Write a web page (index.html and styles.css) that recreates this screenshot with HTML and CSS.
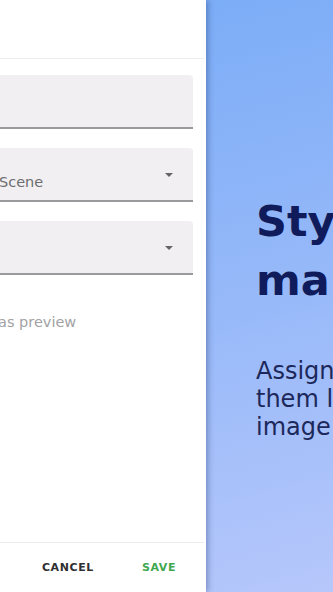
FILE: index.html
```html
<!DOCTYPE html>
<html lang="en">
  <head>
    <meta charset="UTF-8">
    <meta name="viewport" content="width=device-width, initial-scale=1.0">
    <title>Style editor</title>
    <link rel="stylesheet" href="styles.css">
  </head>
  <body>
    <div class="screen">
        <div class="dialog">
            <div class="dialog-header"></div>

            <div class="fields">
                <div class="field"></div>

                <div class="field select">
                    <span class="field-value">Scene</span>
                    <span class="caret"></span>
                </div>

                <div class="field select">
                    <span class="caret"></span>
                </div>

                <div class="hint">as preview</div>
            </div>

            <div class="dialog-actions">
                <button class="text-button">CANCEL</button>
                <button class="text-button primary">SAVE</button>
            </div>
        </div>

        <div class="hero">
            <h1 class="hero-title">Style<br>ma ke</h1>
            <p class="hero-text">Assign styles<br>them like<br>image style</p>
        </div>
    </div>
  </body>
</html>
```

FILE: styles.css
```css
body {
    margin: 0;
    padding: 0;
    width: 333px;
    height: 592px;
    overflow: hidden;
    font-family: 'DejaVu Sans', 'Noto Sans', sans-serif;
    background: #ffffff;
}

.screen {
    display: flex;
    height: 100%;
}

/* left: the dialog, cut off by the screen edge */

.dialog {
    width: 206px;
    flex-shrink: 0;
    display: flex;
    flex-direction: column;
    background: #ffffff;
    position: relative;
    z-index: 1;
    box-shadow: 2px 0 6px rgba(20, 40, 90, 0.35);
}

.dialog-header {
    height: 58px;
    margin-right: 2px;
    border-bottom: 1px solid #ededf0;
}

.fields {
    flex: 1;
    display: flex;
    flex-direction: column;
    gap: 19px;
    padding-top: 16px;
}

.field {
    width: 193px;
    height: 52px;
    background: #f1eff2;
    border-bottom: 2px solid #9a9a9c;
    border-top-right-radius: 4px;
    position: relative;
}

.field-value {
    position: absolute;
    left: 0;
    top: 26px;
    font-size: 14.5px;
    color: #6d6d70;
    text-indent: -1px;
}

.caret {
    position: absolute;
    right: 20px;
    top: 25px;
    width: 0;
    height: 0;
    border-left: 4px solid transparent;
    border-right: 4px solid transparent;
    border-top: 4px solid #656567;
}

.hint {
    margin-top: 20px;
    font-size: 14.5px;
    color: #a2a2a5;
    text-indent: -2px;
}

.dialog-actions {
    height: 49px;
    margin-right: 2px;
    border-top: 1px solid #ededf0;
    display: flex;
    align-items: center;
    justify-content: flex-end;
    gap: 48px;
    padding-right: 28px;
}

.text-button {
    background: none;
    border: none;
    padding: 0;
    font-family: 'DejaVu Sans', sans-serif;
    font-size: 11px;
    font-weight: 700;
    letter-spacing: 0.6px;
    color: #2f2f31;
    cursor: pointer;
}

.text-button.primary {
    color: #3fa84f;
}

/* right: onboarding panel */

.hero {
    flex: 1;
    overflow: hidden;
    padding-left: 50px;
    padding-top: 192px;
    background: linear-gradient(165deg, #7cadf7 0%, #97b9f9 50%, #b6c7fb 100%);
    white-space: nowrap;
}

.hero-title {
    margin: 0;
    font-size: 43px;
    font-weight: 700;
    line-height: 59px;
    color: #101b5c;
}

.hero-text {
    margin: 47px 0 0;
    font-size: 24px;
    line-height: 28px;
    color: #1d285a;
}
```
